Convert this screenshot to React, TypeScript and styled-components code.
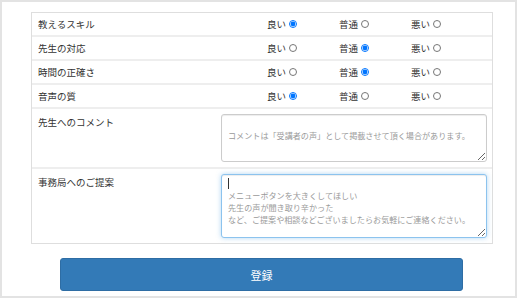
import React from "react";
import styled, { createGlobalStyle, css } from "styled-components";

const GlobalStyle = createGlobalStyle`
  html, body { margin: 0; padding: 0; background: #ffffff; }
  body { font-family: "Noto Sans CJK JP", "Noto Sans", sans-serif; color: #333333; }
  * { box-sizing: border-box; }
`;

const Frame = styled.div`
  width: 517px;
  height: 298px;
  border: 2px solid #e3e3e3;
  padding: 10px 0 0 29px;
  background: #ffffff;
`;

const Table = styled.div`
  width: 462px;
  border: 1px solid #dedede;
  background: #ffffff;
`;

const Row = styled.div<{ $tall?: boolean }>`
  display: grid;
  grid-template-columns: 189px 1fr;
  align-items: ${(p) => (p.$tall ? "start" : "center")};
  min-height: 22px;
  & + & {
    border-top: 2px solid #eeeeee;
  }
`;

const Label = styled.div<{ $tall?: boolean }>`
  padding-left: 6px;
  font-size: 9.5px;
  line-height: 14px;
  color: #333333;
  ${(p) =>
    p.$tall &&
    css`
      padding-top: 6px;
    `}
`;

const Options = styled.div`
  display: flex;
  padding-left: 46px;
  height: 22px;
  align-items: center;
`;

const Option = styled.label`
  width: 72px;
  display: flex;
  align-items: center;
  gap: 2px;
  font-size: 9.5px;
  line-height: 14px;
  color: #333333;
`;

const Radio = styled.input.attrs({ type: "radio" })`
  width: 8px;
  height: 8px;
  margin: 0 0 0 1px;
`;

const FieldCell = styled.div`
  position: relative;
  padding: 5px 5px 5px 0;
  display: flex;
`;

const Area = styled.textarea<{ $h: number; $focus?: boolean }>`
  width: 266px;
  height: ${(p) => p.$h}px;
  font-family: "Noto Sans CJK JP", "Noto Sans", sans-serif;
  font-size: 8.1px;
  line-height: 12px;
  padding: 3px 6px;
  color: #555555;
  border: 1px solid #cccccc;
  border-radius: 3px;
  box-shadow: inset 0 1px 1px rgba(0, 0, 0, 0.075);
  outline: none;
  resize: vertical;
  &::placeholder {
    color: #9a9a9a;
  }
  ${(p) =>
    p.$focus &&
    css`
      border-color: #8cc3ee;
      box-shadow: inset 0 1px 1px rgba(0, 0, 0, 0.075), 0 0 5px rgba(102, 175, 233, 0.5);
    `}
  &:focus {
    border-color: #8cc3ee;
    box-shadow: inset 0 1px 1px rgba(0, 0, 0, 0.075), 0 0 5px rgba(102, 175, 233, 0.5);
  }
`;

const Caret = styled.span`
  position: absolute;
  left: 7px;
  top: 9px;
  width: 1px;
  height: 11px;
  background: #333333;
  pointer-events: none;
`;

const Button = styled.button`
  display: block;
  margin: 14px 0 0 29px;
  width: 403px;
  height: 33px;
  background: #337ab7;
  border: 1px solid #2e6da4;
  border-radius: 3px;
  color: #ffffff;
  font-family: "Noto Sans CJK JP", "Noto Sans", sans-serif;
  font-size: 11px;
  padding: 0;
  cursor: pointer;
`;

const ratings: { label: string; value: number }[] = [
  { label: "教えるスキル", value: 0 },
  { label: "先生の対応", value: 1 },
  { label: "時間の正確さ", value: 1 },
  { label: "音声の質", value: 0 },
];

const choices = ["良い", "普通", "悪い"];

export default function App() {
  return (
    <>
      <GlobalStyle />
      <Frame>
        <Table>
          {ratings.map((r, i) => (
            <Row key={r.label}>
              <Label>{r.label}</Label>
              <Options>
                {choices.map((c, j) => (
                  <Option key={c}>
                    {c}
                    <Radio name={`q${i}`} defaultChecked={j === r.value} />
                  </Option>
                ))}
              </Options>
            </Row>
          ))}
          <Row $tall>
            <Label $tall>先生へのコメント</Label>
            <FieldCell>
              <Area
                $h={48}
                placeholder={"\nコメントは「受講者の声」として掲載させて頂く場合があります。"}
              />
            </FieldCell>
          </Row>
          <Row $tall>
            <Label $tall>事務局へのご提案</Label>
            <FieldCell>
              <Area
                $h={64}
                $focus
                placeholder={
                  "\nメニューボタンを大きくしてほしい\n先生の声が聞き取り辛かった\nなど、ご提案や相談などございましたらお気軽にご連絡ください。"
                }
              />
              <Caret />
            </FieldCell>
          </Row>
        </Table>
        <Button>登録</Button>
      </Frame>
    </>
  );
}
